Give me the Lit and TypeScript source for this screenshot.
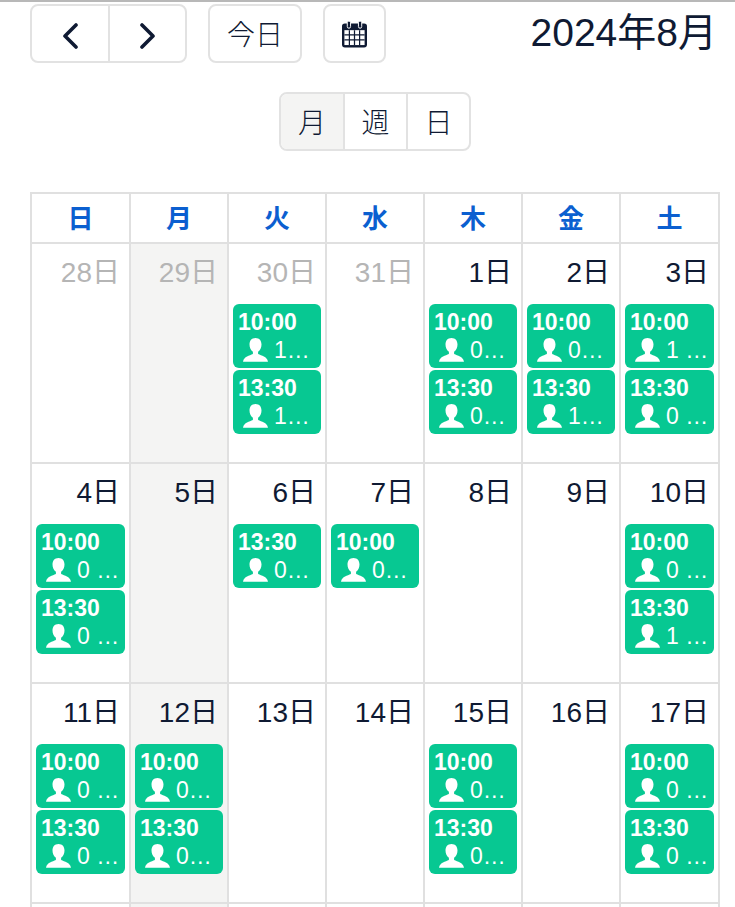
import { LitElement, html, css, svg } from 'lit';
import { customElement } from 'lit/decorators.js';
import { classMap } from 'lit/directives/class-map.js';

type Slot = [string, string];
type Day = { n: number; muted?: boolean; events?: Slot[] };

const weekdays = ['日', '月', '火', '水', '木', '金', '土'];

const weeks: Day[][] = [
  [
    { n: 28, muted: true },
    { n: 29, muted: true },
    { n: 30, muted: true, events: [['10:00', '1 / 6名'], ['13:30', '1 / 6名']] },
    { n: 31, muted: true },
    { n: 1, events: [['10:00', '0 / 6名'], ['13:30', '0 / 6名']] },
    { n: 2, events: [['10:00', '0 / 6名'], ['13:30', '1 / 6名']] },
    { n: 3, events: [['10:00', '1 / 6名'], ['13:30', '0 / 6名']] },
  ],
  [
    { n: 4, events: [['10:00', '0 / 6名'], ['13:30', '0 / 6名']] },
    { n: 5 },
    { n: 6, events: [['13:30', '0 / 6名']] },
    { n: 7, events: [['10:00', '0 / 6名']] },
    { n: 8 },
    { n: 9 },
    { n: 10, events: [['10:00', '0 / 6名'], ['13:30', '1 / 6名']] },
  ],
  [
    { n: 11, events: [['10:00', '0 / 6名'], ['13:30', '0 / 6名']] },
    { n: 12, events: [['10:00', '0 / 6名'], ['13:30', '0 / 6名']] },
    { n: 13 },
    { n: 14 },
    { n: 15, events: [['10:00', '0 / 6名'], ['13:30', '0 / 6名']] },
    { n: 16 },
    { n: 17, events: [['10:00', '0 / 6名'], ['13:30', '0 / 6名']] },
  ],
  [{ n: 18 }, { n: 19 }, { n: 20 }, { n: 21 }, { n: 22 }, { n: 23 }, { n: 24 }],
];

const personIcon = svg`<path d="M12.500 0C8.600 0 6.500 2.800 6.500 6.500c0 3 1.300 5.800 3.400 7.300v2.300C6.500 17.800 1 18.300 0 23.800h25C24 18.300 18.500 17.800 15.100 16.100v-2.300C17.200 12.300 18.500 9.500 18.500 6.500 18.500 2.800 16.400 0 12.500 0z" fill="#fff"/>`;

@customElement('app-root')
export class AppRoot extends LitElement {
  static styles = css`
    :host {
      display: block;
      height: 907px;
      overflow: hidden;
      background: #fff;
      color: #0f1a33;
      font-family: 'Liberation Sans', 'Noto Sans CJK JP', sans-serif;
      border-top: 2px solid #b8b8b8;
      box-sizing: border-box;
    }
    .page {
      padding: 2px 15px 0 30px;
    }
    .toolbar {
      display: flex;
      justify-content: space-between;
      align-items: flex-start;
      height: 59px;
    }
    .left {
      display: flex;
      gap: 21px;
    }
    .group {
      display: flex;
      border: 2px solid #e2e2e2;
      border-radius: 8px;
      overflow: hidden;
      box-sizing: border-box;
      height: 59px;
    }
    .btn {
      display: flex;
      align-items: center;
      justify-content: center;
      font-size: 28px;
      font-weight: 300;
      box-sizing: border-box;
      padding-bottom: 2px;
    }
    .btn + .btn {
      border-left: 2px solid #e2e2e2;
    }
    .nav {
      width: 76px;
      padding: 4px 0 0;
    }
    .nav + .nav {
      width: 77px;
    }
    .today {
      width: 90px;
    }
    .cal {
      width: 59px;
      padding: 0;
    }
    .btn svg {
      display: block;
    }
    h2 {
      margin: 7px 3px 0 0;
      font-size: 39px;
      font-weight: 400;
      line-height: 44px;
    }
    .views {
      display: flex;
      justify-content: center;
      margin: 29px 0 41px;
    }
    .view {
      width: 63px;
    }
    .view.active {
      width: 62px;
      background: #f4f4f3;
    }
    .grid {
      display: grid;
      grid-template-columns: 99px repeat(5, 98px) 99px;
      width: 690px;
      box-sizing: border-box;
      border-right: 2px solid #e0e0e0;
    }
    .head {
      height: 50px;
      box-sizing: border-box;
      border-top: 2px solid #e0e0e0;
      border-left: 2px solid #e0e0e0;
      padding-bottom: 3px;
      display: flex;
      align-items: center;
      justify-content: center;
      font-size: 26px;
      font-weight: 700;
      color: #0b5fd0;
    }
    .cell {
      height: 220px;
      box-sizing: border-box;
      border-top: 2px solid #e0e0e0;
      border-left: 2px solid #e0e0e0;
      padding: 0 4px;
    }
    .cell.shade {
      background: #f4f4f3;
    }
    .num {
      height: 60px;
      box-sizing: border-box;
      padding: 13px 5px 0 0;
      line-height: 32px;
      font-size: 28px;
      text-align: right;
    }
    .num.muted {
      color: #b5b5b5;
    }
    .events {
      display: flex;
      flex-direction: column;
      gap: 2px;
    }
    .event {
      height: 64px;
      box-sizing: border-box;
      padding: 4px 5px 0 5px;
      border-radius: 6px;
      background: #07c892;
      color: #fff;
      font-size: 23px;
      line-height: 28px;
    }
    .time {
      font-weight: 700;
    }
    .who {
      display: flex;
      align-items: center;
      gap: 6px;
      padding-left: 5px;
    }
    .who svg {
      flex: none;
    }
    .who span {
      flex: 1;
      min-width: 0;
      white-space: nowrap;
      overflow: hidden;
      text-overflow: ellipsis;
    }
  `;

  renderCell(day: Day, col: number) {
    return html`
      <div class=${classMap({ cell: true, shade: col === 1 })}>
        <div class=${classMap({ num: true, muted: !!day.muted })}>${day.n}日</div>
        <div class="events">
          ${(day.events ?? []).map(
            ([time, seats]) => html`
              <div class="event">
                <div class="time">${time}</div>
                <div class="who">
                  <svg width="25" height="24" viewBox="0 0 25 24">${personIcon}</svg>
                  <span>${seats}</span>
                </div>
              </div>
            `
          )}
        </div>
      </div>
    `;
  }

  render() {
    return html`
      <div class="page">
        <div class="toolbar">
          <div class="left">
            <div class="group">
              <div class="btn nav">
                <svg width="18" height="26" viewBox="0 0 18 26">
                  <path d="M15 2 4 13l11 11" fill="none" stroke="#0f1a33" stroke-width="3.600" stroke-linecap="round" stroke-linejoin="round" />
                </svg>
              </div>
              <div class="btn nav">
                <svg width="18" height="26" viewBox="0 0 18 26">
                  <path d="M3 2l11 11L3 24" fill="none" stroke="#0f1a33" stroke-width="3.600" stroke-linecap="round" stroke-linejoin="round" />
                </svg>
              </div>
            </div>
            <div class="group"><div class="btn today">今日</div></div>
            <div class="group">
              <div class="btn cal">
                <svg width="25" height="28" viewBox="0 0 26 28">
                  <path d="M3 3h20a3 3 0 0 1 3 3v19a3 3 0 0 1-3 3H3a3 3 0 0 1-3-3V6a3 3 0 0 1 3-3z" fill="#0f1a33" />
                  <rect x="2.500" y="10" width="21" height="15.500" fill="#fff" />
                  <path d="M2.500 15h21M2.500 20.200h21M7.700 10v15.500M13 10v15.500M18.300 10v15.500" stroke="#0f1a33" stroke-width="1.300" />
                  <rect x="5.500" y="0.500" width="3.400" height="7.500" rx="1.700" fill="#0f1a33" stroke="#fff" stroke-width="1" />
                  <rect x="17.100" y="0.500" width="3.400" height="7.500" rx="1.700" fill="#0f1a33" stroke="#fff" stroke-width="1" />
                </svg>
              </div>
            </div>
          </div>
          <h2>2024年8月</h2>
        </div>
        <div class="views">
          <div class="group">
            <div class="btn view active">月</div>
            <div class="btn view">週</div>
            <div class="btn view">日</div>
          </div>
        </div>
        <div class="grid">
          ${weekdays.map((w) => html`<div class="head">${w}</div>`)}
          ${weeks.map((week) => week.map((day, i) => this.renderCell(day, i)))}
        </div>
      </div>
    `;
  }
}
